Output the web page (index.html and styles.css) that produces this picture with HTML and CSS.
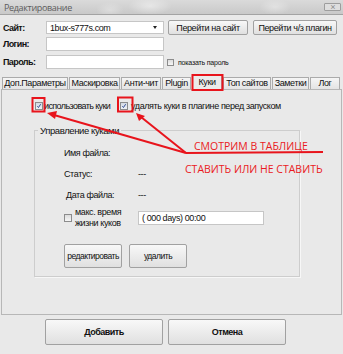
FILE: index.html
```html
<!DOCTYPE html>
<html>
<head>
    <meta charset="utf-8">
    <title>Редактирование</title>
    <link rel="stylesheet" href="styles.css">
</head>
<body>
<div class="window">
    <div class="titlebar">
        <span class="title">Редактирование</span>
        <span class="close">&#x2A2F;</span>
    </div>

    <div class="form">
        <div class="row row_site">
            <span class="lbl">Сайт:</span>
            <div class="field combo"><span>1bux-s777s.com</span><span class="caret"></span></div>
            <button class="btn btn_go">Перейти на сайт</button>
            <button class="btn btn_plugin">Перейти ч/з плагин</button>
        </div>
        <div class="row row_login">
            <span class="lbl">Логин:</span>
            <div class="field"></div>
        </div>
        <div class="row row_pass">
            <span class="lbl">Пароль:</span>
            <div class="field"></div>
            <span class="check small_check"></span>
            <span class="tiny">показать пароль</span>
        </div>
    </div>

    <div class="tabs">
        <span class="tab t1">Доп.Параметры</span>
        <span class="tab t2">Маскировка</span>
        <span class="tab t3">Анти-чит</span>
        <span class="tab t4">Plugin</span>
        <span class="tab t5 active">Куки</span>
        <span class="tab t6">Топ сайтов</span>
        <span class="tab t7">Заметки</span>
        <span class="tab t8">Лог</span>
    </div>

    <div class="panel">
        <div class="opts">
            <span class="check on"><svg viewBox="0 0 8 8"><path d="M1.8 4.3 3.3 6 6.2 1.6"/></svg></span>
            <span class="opt_text opt1">использовать куки</span>
            <span class="check on"><svg viewBox="0 0 8 8"><path d="M1.8 4.3 3.3 6 6.2 1.6"/></svg></span>
            <span class="opt_text">удалять куки в плагине перед запуском</span>
        </div>

        <fieldset class="group">
            <legend>Управление куками</legend>
            <div class="group_body">
                <span class="k">Имя файла:</span><span class="v"></span>
                <span class="k">Статус:</span><span class="v">---</span>
                <span class="k k_date">Дата файла:</span><span class="v">---</span>
                <div class="k life">
                    <span class="check"></span>
                    <span class="life_text">макс. время<br>жизни куков</span>
                </div>
                <div class="field time">( 000 days) 00:00</div>
                <div class="group_btns">
                    <button class="btn btn_small">редактировать</button>
                    <button class="btn btn_small">удалить</button>
                </div>
            </div>
        </fieldset>
    </div>

    <div class="actions">
        <button class="btn btn_big">Добавить</button>
        <button class="btn btn_big">Отмена</button>
    </div>

    <!-- red notes drawn over the screenshot -->
    <svg class="notes" width="343" height="354" viewBox="0 0 343 354">
        <g fill="none" stroke="#e8141c" stroke-width="2">
            <rect x="192.5" y="75" width="30" height="15"/>
            <rect x="32.5" y="98" width="12" height="13.5"/>
            <rect x="118" y="97.5" width="14.5" height="14"/>
            <path d="M186 153 L323 152"/>
            <path d="M186 153 L54 115"/>
            <path d="M186 153 L141 117"/>
        </g>
        <g fill="#e8141c">
            <path d="M47 113 L57 111 L55 119 Z"/>
            <path d="M136 113 L145 116 L139 121 Z"/>
        </g>
    </svg>
    <div class="note note1">СМОТРИМ В ТАБЛИЦЕ</div>
    <div class="note note2">СТАВИТЬ ИЛИ НЕ СТАВИТЬ</div>
</div>
</body>
</html>
```

FILE: styles.css
```css
* {
    box-sizing: border-box;
}

body {
    margin: 0;
    background-color: #e8e8e8;
    font-family: "Liberation Sans", Arial, sans-serif;
    font-size: 9px;
    letter-spacing: -0.4px;
    color: #111111;
}

.window {
    position: relative;
    width: 343px;
    height: 354px;
    background-color: #e9e9e9;
    overflow: hidden;
}

.titlebar {
    height: 15px;
    display: flex;
    align-items: center;
    justify-content: space-between;
    padding: 0 2px 0 4px;
    background:
        radial-gradient(ellipse 22px 9px at 150px 6px, rgba(255,255,255,0.45), transparent),
        radial-gradient(ellipse 14px 8px at 110px 10px, rgba(255,255,255,0.3), transparent),
        radial-gradient(ellipse 16px 8px at 275px 7px, rgba(255,255,255,0.35), transparent),
        linear-gradient(#dadada, #c9c9c9);
    border-bottom: 1px solid #a3a3a3;
}

.title {
    font-family: "Open Sans", sans-serif;
    font-size: 9px;
    letter-spacing: -0.35px;
    color: #5c5c5c;
}

.close {
    width: 17px;
    height: 8px;
    border: 1px solid #9d9d9d;
    border-radius: 1px;
    background-color: #dedede;
    color: #8a8a8a;
    font-size: 7px;
    line-height: 6px;
    text-align: center;
}

.form {
    display: flex;
    flex-direction: column;
    padding: 5px 0 0 3px;
}

.row {
    display: flex;
    align-items: center;
    white-space: nowrap;
}

.row_site {
    height: 15px;
}

.row_login {
    height: 14px;
    margin-top: 2px;
}

.row_pass {
    height: 14px;
    margin-top: 4px;
}

.lbl {
    width: 43px;
    font-weight: bold;
    letter-spacing: -0.6px;
}

.field {
    width: 118px;
    height: 14px;
    background-color: #ffffff;
    border: 1px solid #c6c6c6;
}

.combo {
    height: 13px;
    display: flex;
    align-items: center;
    justify-content: space-between;
    padding: 0 6px 0 3px;
}

.caret {
    border-left: 2.5px solid transparent;
    border-right: 2.5px solid transparent;
    border-top: 3px solid #222222;
}

.btn {
    padding: 0;
    font-family: inherit;
    font-size: 9px;
    letter-spacing: -0.4px;
    white-space: nowrap;
    color: #111111;
    background: linear-gradient(#f8f8f8, #e0e0e0);
    border: 1px solid #a1a1a1;
    border-radius: 2px;
}

.btn_go {
    width: 80px;
    height: 15px;
    margin-left: 4px;
}

.btn_plugin {
    width: 84px;
    height: 15px;
    margin-left: 5px;
}

.check {
    display: inline-block;
    flex: none;
    width: 8px;
    height: 8px;
    border: 1px solid #8c8c8c;
    background: linear-gradient(#dcdcdc, #f6f6f6);
}

.check.on {
    background: linear-gradient(#d2d9e4, #eef1f6);
}

.check svg {
    display: block;
    width: 6px;
    height: 6px;
}

.check path {
    fill: none;
    stroke: #1f3c8a;
    stroke-width: 1.2;
}

.small_check {
    width: 7px;
    height: 7px;
    margin-left: 3px;
}

.tiny {
    margin-left: 4px;
    font-size: 7px;
    letter-spacing: -0.2px;
}

.tabs {
    display: flex;
    align-items: flex-end;
    gap: 1px;
    height: 14px;
    margin-top: 6px;
    padding-left: 2px;
    white-space: nowrap;
}

.tab {
    height: 12px;
    padding: 0;
    line-height: 11px;
    text-align: center;
    background: linear-gradient(#f5f5f5, #e4e4e4);
    border: 1px solid #ababab;
    border-bottom: none;
}

.t1 { width: 66px; }
.t2 { width: 51px; }
.t3 { width: 40px; }
.t4 { width: 29px; }
.t5 { width: 30px; }
.t6 { width: 48px; }
.t7 { width: 37px; }
.t8 { width: 30px; }

.tab.active {
    height: 14px;
    line-height: 13px;
    background: #ebebeb;
}

.panel {
    height: 226px;
    margin: 0 1px;
    background-color: #e9e9e9;
    border: 1px solid #b7b7b7;
}

.opts {
    display: flex;
    align-items: center;
    padding: 11px 0 0 33px;
    white-space: nowrap;
}

.opt_text {
    margin-left: 3px;
}

.opt1 {
    width: 73px;
    margin-left: 1px;
    margin-right: 3px;
    letter-spacing: -0.6px;
}

.group {
    width: 266px;
    margin: 14px 0 0 32px;
    padding: 0;
    border: 1px solid #cdcdcd;
    box-shadow: 1px 1px 0 #f7f7f7;
}

.group legend {
    margin-left: 3px;
    padding: 0 2px;
    font-size: 9.5px;
}

.group_body {
    display: grid;
    grid-template-columns: 74px 126px;
    grid-template-rows: 21px 21px 21px 26px auto;
    align-items: center;
    padding: 6px 0 8px 29px;
}

.k_date {
    margin-left: 2px;
}

.life {
    display: flex;
    align-items: center;
}

.life_text {
    margin-left: 3px;
    line-height: 11px;
}

.time {
    display: flex;
    align-items: center;
    width: 126px;
    padding-left: 3px;
}

.group_btns {
    grid-column: 1 / 3;
    display: flex;
    gap: 7px;
    margin-top: 13px;
}

.btn_small {
    width: 58px;
    height: 24px;
    font-size: 8.5px;
    letter-spacing: -0.5px;
}

.actions {
    display: flex;
    gap: 5px;
    padding: 4px 0 0 45px;
}

.btn_big {
    width: 118px;
    height: 26px;
    font-weight: bold;
    letter-spacing: -0.5px;
}

.notes {
    position: absolute;
    left: 0;
    top: 0;
    pointer-events: none;
}

.note {
    position: absolute;
    font-family: "Open Sans", sans-serif;
    font-size: 10.5px;
    letter-spacing: 0;
    color: #ea1a22;
    white-space: nowrap;
}

.note1 {
    left: 194px;
    top: 139px;
}

.note2 {
    left: 185px;
    top: 162px;
}
```
